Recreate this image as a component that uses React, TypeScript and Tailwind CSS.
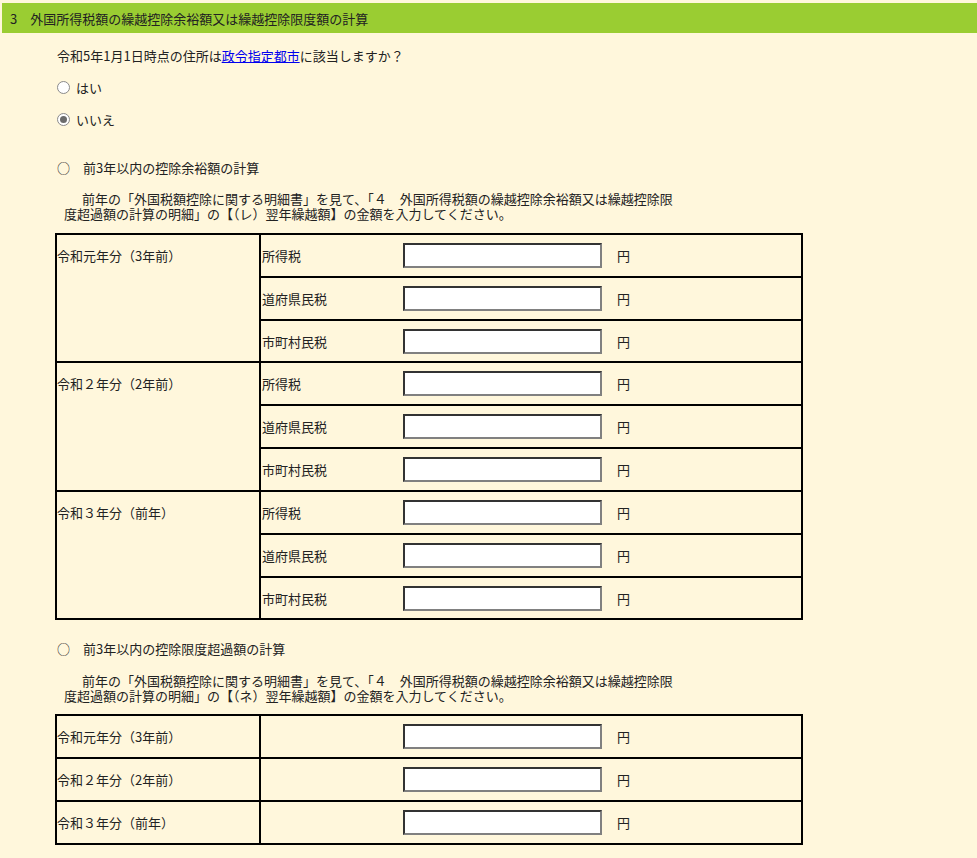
import React, { useState } from "react";

const taxes = ["所得税", "道府県民税", "市町村民税"];
const years = ["令和元年分（3年前）", "令和２年分（2年前）", "令和３年分（前年）"];

function Radio({ checked, label, onClick }: { checked: boolean; label: string; onClick: () => void }) {
  return (
    <div className="flex items-center h-[15px] cursor-pointer" onClick={onClick}>
      <span className="w-[13px] h-[13px] rounded-full border border-[#8a8a8a] bg-white flex items-center justify-center">
        {checked && <span className="w-[7px] h-[7px] rounded-full bg-[#6b6b6b]" />}
      </span>
      <span className="ml-[6px]">{label}</span>
    </div>
  );
}

function AmountInput() {
  return (
    <div className="flex items-center">
      <input
        type="text"
        className="w-[199px] h-[25px] bg-white border-2 border-solid border-t-[#333] border-l-[#333] border-r-[#808080] border-b-[#808080] outline-none px-1"
      />
      <span className="ml-[15px]">円</span>
    </div>
  );
}

// short rows make up for the uneven row pitch of the original table
function Row({ label, first, short }: { label: string; first: boolean; short?: boolean }) {
  let cls = "h-[43px] flex items-center border-t-2 border-black";
  if (first) cls = "h-[41px] flex items-center";
  else if (short) cls = "h-[42px] flex items-center border-t-2 border-black";
  return (
    <div className={cls}>
      <div className="w-[142px] pl-px">{label}</div>
      <AmountInput />
    </div>
  );
}

export default function App() {
  const [city, setCity] = useState("no");

  return (
    <div
      className="min-h-[858px] bg-[#fff7dc] text-[13px] leading-[15px] text-[#222] pt-[3px] pb-[14px]"
      style={{ fontFamily: '"Noto Sans CJK JP", "Noto Sans", sans-serif' }}
    >
      <div className="ml-[2px] h-[30px] bg-[#9acd32] flex items-center pl-[8px]">
        3　外国所得税額の繰越控除余裕額又は繰越控除限度額の計算
      </div>

      <div className="pl-[57px]">
        <p className="mt-[15px]">
          令和5年1月1日時点の住所は
          <a href="#" className="text-[#0000ee] underline">政令指定都市</a>
          に該当しますか？
        </p>
        <div className="mt-[17px]">
          <Radio checked={city === "yes"} label="はい" onClick={() => setCity("yes")} />
        </div>
        <div className="mt-[17px]">
          <Radio checked={city === "no"} label="いいえ" onClick={() => setCity("no")} />
        </div>

        <p className="mt-[33px] whitespace-pre">○　前3年以内の控除余裕額の計算</p>
        <p className="mt-[16px] pl-[7px] indent-[18px] whitespace-nowrap">
          前年の「外国税額控除に関する明細書」を見て、「４　外国所得税額の繰越控除余裕額又は繰越控除限
          <br />
          度超過額の計算の明細」の【（レ）翌年繰越額】の金額を入力してください。
        </p>
      </div>

      <div className="ml-[55px] mt-[12px] w-[748px] border-2 border-black">
        {years.map((y, i) => (
          <div key={y} className={i > 0 ? "flex border-t-2 border-black" : "flex"}>
            <div className="w-[204px] border-r-2 border-black">
              <div className="h-[41px] flex items-center">{y}</div>
            </div>
            <div className="flex-1">
              {taxes.map((t, j) => (
                <Row
                  key={t}
                  label={t}
                  first={j === 0}
                  short={(i === 0 && j === 2) || (i === 2 && j === 2)}
                />
              ))}
            </div>
          </div>
        ))}
      </div>

      <div className="pl-[57px]">
        <p className="mt-[21px] whitespace-pre">○　前3年以内の控除限度超過額の計算</p>
        <p className="mt-[17px] pl-[7px] indent-[18px] whitespace-nowrap">
          前年の「外国税額控除に関する明細書」を見て、「４　外国所得税額の繰越控除余裕額又は繰越控除限
          <br />
          度超過額の計算の明細」の【（ネ）翌年繰越額】の金額を入力してください。
        </p>
      </div>

      <div className="ml-[55px] mt-[11px] w-[748px] border-2 border-black">
        {years.map((y, i) => (
          <div key={y} className={i > 0 ? "flex border-t-2 border-black" : "flex"}>
            <div className="w-[204px] border-r-2 border-black h-[41px] flex items-center">{y}</div>
            <div className="flex-1">
              <Row label="" first />
            </div>
          </div>
        ))}
      </div>
    </div>
  );
}
